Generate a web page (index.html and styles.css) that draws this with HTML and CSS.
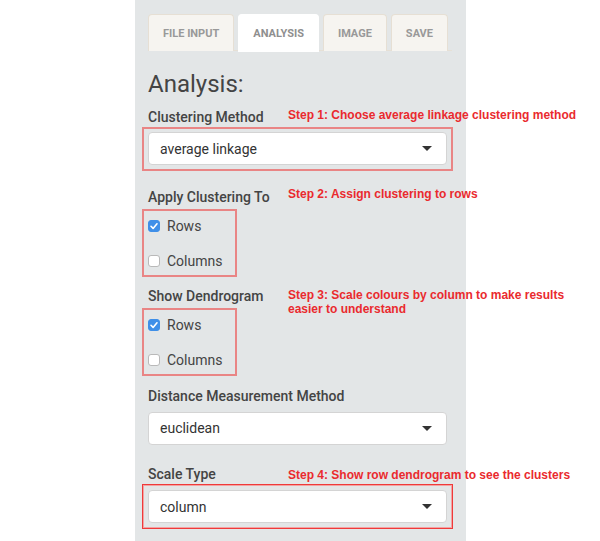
FILE: index.html
```html
<!DOCTYPE html>
<html>
<head>
<meta charset="utf-8">
<link rel="stylesheet" href="styles.css">
</head>
<body>
<div class="panel">
  <div class="tabs">
    <div class="tab">File Input</div>
    <div class="tab active">Analysis</div>
    <div class="tab">Image</div>
    <div class="tab">Save</div>
  </div>
  <h2 class="title">Analysis:</h2>

  <div class="label l1">Clustering Method</div>
  <div class="hl hl-select">
    <div class="select"><span>average linkage</span><span class="caret"></span></div>
  </div>

  <div class="label l2">Apply Clustering To</div>
  <div class="hl hl-checks">
    <div class="check"><span class="box on"><svg viewBox="0 0 12 12" width="12" height="12"><path d="M3 6.3 L5.1 8.4 L9 3.8" fill="none" stroke="#fff" stroke-width="1.6" stroke-linecap="round" stroke-linejoin="round"/></svg></span>Rows</div>
    <div class="check"><span class="box"></span>Columns</div>
  </div>

  <div class="label l3">Show Dendrogram</div>
  <div class="hl hl-checks">
    <div class="check"><span class="box on"><svg viewBox="0 0 12 12" width="12" height="12"><path d="M3 6.3 L5.1 8.4 L9 3.8" fill="none" stroke="#fff" stroke-width="1.6" stroke-linecap="round" stroke-linejoin="round"/></svg></span>Rows</div>
    <div class="check"><span class="box"></span>Columns</div>
  </div>

  <div class="label l4">Distance Measurement Method</div>
  <div class="select plain"><span>euclidean</span><span class="caret"></span></div>

  <div class="label l5">Scale Type</div>
  <div class="hl hl-select strong">
    <div class="select"><span>column</span><span class="caret"></span></div>
  </div>

  <div class="note n1">Step 1: Choose average linkage clustering method</div>
  <div class="note n2">Step 2: Assign clustering to rows</div>
  <div class="note n3">Step 3: Scale colours by column to make results easier to understand</div>
  <div class="note n4">Step 4: Show row dendrogram to see the clusters</div>
</div>
</body>
</html>
```

FILE: styles.css
```css
* { box-sizing: border-box; }
html, body { margin: 0; padding: 0; background: #fff; }
body { font-family: Roboto, "Liberation Sans", sans-serif; color: #444; }

.panel {
  position: relative;
  margin-left: 135px;
  width: 331px;
  min-height: 541px;
  background: #e3e6e7;
  padding: 14px 19px 0 13px;
}

.tabs {
  display: flex;
  gap: 4px;
  height: 37px;
  margin-right: -5px;
  border-bottom: 1px solid #e6e0d6;
}
.tab {
  height: 37px;
  padding: 0 14px;
  display: flex;
  align-items: center;
  justify-content: center;
  background: #f6f4f0;
  border: 1px solid #e6dfd4;
  border-bottom: none;
  border-radius: 4px 4px 0 0;
  font-size: 11px;
  font-weight: 700;
  text-transform: uppercase;
  color: #999;
}
.tab.active { background: #fff; border-color: #fff; height: 38px; color: #8f8f8f; }

.title {
  margin: 19px 0 0;
  font-size: 24px;
  line-height: 28px;
  font-weight: 400;
  color: #444;
}

.label {
  font-size: 14px;
  line-height: 20px;
  font-weight: 500;
  color: #444;
}
.l1 { margin-top: 9px; }
.l2 { margin-top: 16px; }
.l3 { margin-top: 9px; }
.l4 { margin-top: 10px; margin-bottom: 5.5px; }
.l5 { margin-top: 19.5px; }

.hl {
  margin-left: -6px;
  border: 2px solid #e98585;
}
.hl-select { width: 311px; padding: 3px 4px 4px; }
.hl-select.strong {
  border: 2px solid #f3a3a3;
  outline: 1px solid #ef3a3a;
  outline-offset: -1px;
  padding: 4px;
}
.hl-checks {
  width: 95px;
  padding: 5px 4px 4px;
  display: flex;
  flex-direction: column;
  gap: 15px;
  margin-top: 2px;
}

.select {
  width: 299px;
  height: 33px;
  background: #fff;
  border: 1px solid #d4d4d4;
  border-radius: 4px;
  display: flex;
  align-items: center;
  justify-content: space-between;
  padding: 0 14px 0 11px;
  font-size: 14px;
  color: #333;
}
.caret {
  width: 0;
  height: 0;
  border-left: 5px solid transparent;
  border-right: 5px solid transparent;
  border-top: 5px solid #333;
}

.check {
  display: flex;
  align-items: center;
  gap: 7px;
  height: 20px;
  font-size: 14px;
  color: #444;
}
.box {
  width: 12px;
  height: 12px;
  border-radius: 3px;
  background: #fff;
  border: 1px solid #b9b9b9;
  display: flex;
}
.box.on { background: #3f8fe8; border-color: #3f8fe8; }
.box.on svg { margin: -1px; }

.note {
  position: absolute;
  left: 153px;
  width: 292px;
  font-family: "Liberation Sans", Arial, sans-serif;
  font-size: 12px;
  font-weight: 700;
  line-height: 13.5px;
  color: #ea2a2e;
}
.n1 { top: 108.5px; width: 330px; }
.n2 { top: 188px; }
.n3 { top: 289px; }
.n4 { top: 468.5px; width: 330px; }
```
